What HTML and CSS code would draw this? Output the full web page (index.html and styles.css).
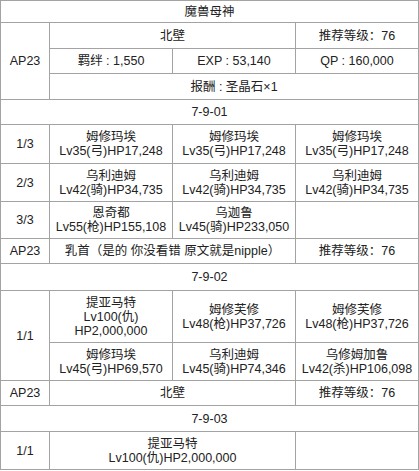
FILE: index.html
```html
<!DOCTYPE html>
<html lang="zh-CN">
<head>
<meta charset="utf-8">
<title>魔兽母神</title>
<link rel="stylesheet" href="styles.css">
</head>
<body>
<div class="sheet">
  <div class="c span4">魔兽母神</div>

  <div class="c rows3">AP23</div>
  <div class="c span2">北壁</div>
  <div class="c">推荐等级：76</div>
  <div class="c">羁绊 : 1,550</div>
  <div class="c">EXP : 53,140</div>
  <div class="c">QP : 160,000</div>
  <div class="c span3">报酬 : 圣晶石×1</div>

  <div class="c span4">7-9-01</div>

  <div class="c">1/3</div>
  <div class="c">姆修玛埃<br>Lv35(弓)HP17,248</div>
  <div class="c">姆修玛埃<br>Lv35(弓)HP17,248</div>
  <div class="c">姆修玛埃<br>Lv35(弓)HP17,248</div>

  <div class="c">2/3</div>
  <div class="c">乌利迪姆<br>Lv42(骑)HP34,735</div>
  <div class="c">乌利迪姆<br>Lv42(骑)HP34,735</div>
  <div class="c">乌利迪姆<br>Lv42(骑)HP34,735</div>

  <div class="c">3/3</div>
  <div class="c">恩奇都<br>Lv55(枪)HP155,108</div>
  <div class="c">乌迦鲁<br>Lv45(骑)HP233,050</div>
  <div class="c"></div>

  <div class="c">AP23</div>
  <div class="c span2">乳首（是的 你没看错 原文就是nipple）</div>
  <div class="c">推荐等级：76</div>

  <div class="c span4">7-9-02</div>

  <div class="c rows2">1/1</div>
  <div class="c">提亚马特<br>Lv100(仇)<br>HP2,000,000</div>
  <div class="c">姆修芙修<br>Lv48(枪)HP37,726</div>
  <div class="c">姆修芙修<br>Lv48(枪)HP37,726</div>
  <div class="c">姆修玛埃<br>Lv45(弓)HP69,570</div>
  <div class="c">乌利迪姆<br>Lv45(骑)HP74,346</div>
  <div class="c">乌修姆加鲁<br>Lv42(杀)HP106,098</div>

  <div class="c">AP23</div>
  <div class="c span2">北壁</div>
  <div class="c">推荐等级：76</div>

  <div class="c span4">7-9-03</div>

  <div class="c">1/1</div>
  <div class="c span2">提亚马特<br>Lv100(仇)HP2,000,000</div>
  <div class="c"></div>
</div>
</body>
</html>
```

FILE: styles.css
```css
html, body {
  margin: 0;
  padding: 0;
  background: #ffffff;
}

body {
  font-family: "Liberation Sans", "Noto Sans CJK SC", sans-serif;
  font-size: 12.5px;
  color: #222222;
}

.sheet {
  display: grid;
  width: 417px;
  grid-template-columns: 48px 122px 122px 122px;
  grid-template-rows: 21px 25px 24px 25px 24px 38px 37px 36px 24px 26px 51px 37px 24px 25px 37px;
  gap: 1px;
  border: 1px solid #a3a3a3;
  background: #a3a3a3;
}

.c {
  display: flex;
  align-items: center;
  justify-content: center;
  text-align: center;
  background: #ffffff;
  line-height: 14px;
  white-space: nowrap;
}

.span2 { grid-column: span 2; }
.span3 { grid-column: span 3; }
.span4 { grid-column: span 4; }
.rows2 { grid-row: span 2; }
.rows3 { grid-row: span 3; }
```
